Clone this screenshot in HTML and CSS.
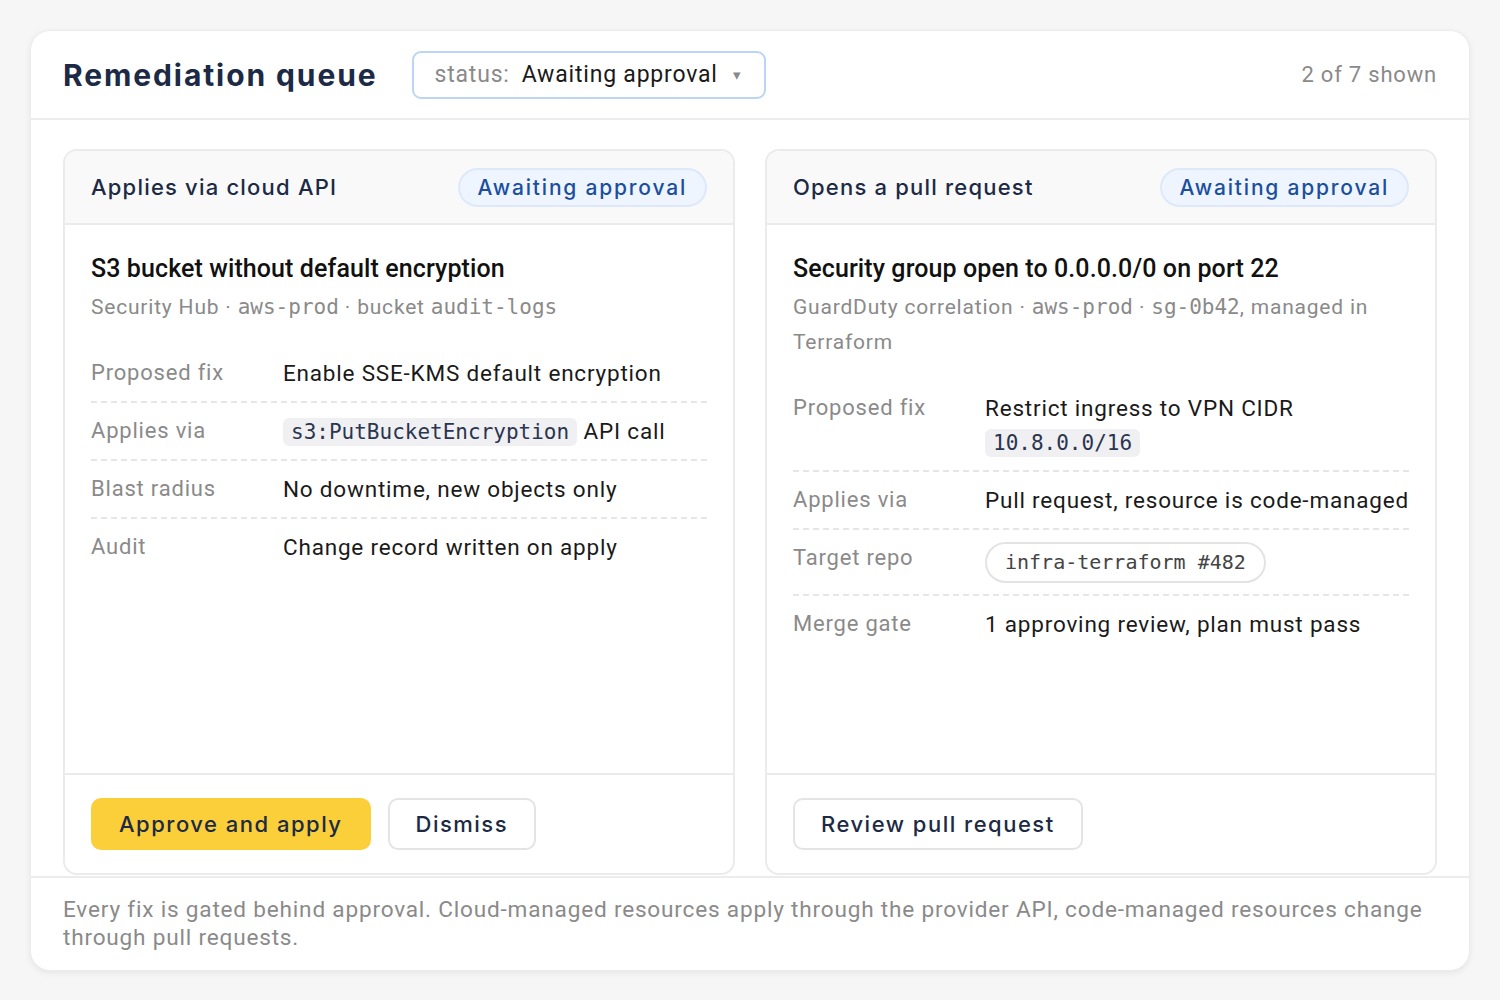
FILE: index.html
```html
<!DOCTYPE html>
<html lang="en">
<head>
  <meta charset="UTF-8">
  <meta name="viewport" content="width=device-width, initial-scale=1.0">
  <link rel="stylesheet" href="styles.css">
  <title>Remediation queue</title>
</head>
<body>
  <div class="queue">
    <div class="queue-head">
      <h1>Remediation queue</h1>
      <div class="status-filter">
        <span class="status-key">status:</span>
        <span class="status-value">Awaiting approval</span>
        <span class="caret">&#9662;</span>
      </div>
      <span class="queue-count">2 of 7 shown</span>
    </div>

    <div class="queue-body">
      <div class="card">
        <div class="card-head">
          <h2>Applies via cloud API</h2>
          <span class="badge">Awaiting approval</span>
        </div>
        <div class="card-main">
          <h3>S3 bucket without default encryption</h3>
          <p class="meta">Security Hub &middot; <span class="mono">aws-prod</span> &middot; bucket <span class="mono">audit-logs</span></p>
          <div class="facts">
            <div class="fact">
              <span class="fact-label">Proposed fix</span>
              <span class="fact-value">Enable SSE-KMS default encryption</span>
            </div>
            <div class="fact">
              <span class="fact-label">Applies via</span>
              <span class="fact-value"><code>s3:PutBucketEncryption</code> API call</span>
            </div>
            <div class="fact">
              <span class="fact-label">Blast radius</span>
              <span class="fact-value">No downtime, new objects only</span>
            </div>
            <div class="fact">
              <span class="fact-label">Audit</span>
              <span class="fact-value">Change record written on apply</span>
            </div>
          </div>
        </div>
        <div class="card-foot">
          <button class="btn btn-primary">Approve and apply</button>
          <button class="btn">Dismiss</button>
        </div>
      </div>

      <div class="card">
        <div class="card-head">
          <h2>Opens a pull request</h2>
          <span class="badge">Awaiting approval</span>
        </div>
        <div class="card-main">
          <h3>Security group open to 0.0.0.0/0 on port 22</h3>
          <p class="meta">GuardDuty correlation &middot; <span class="mono">aws-prod</span> &middot; <span class="mono">sg-0b42</span>, managed in Terraform</p>
          <div class="facts">
            <div class="fact">
              <span class="fact-label">Proposed fix</span>
              <span class="fact-value">Restrict ingress to VPN CIDR <code class="code-wrapped">10.8.0.0/16</code></span>
            </div>
            <div class="fact">
              <span class="fact-label">Applies via</span>
              <span class="fact-value">Pull request, resource is code-managed</span>
            </div>
            <div class="fact">
              <span class="fact-label">Target repo</span>
              <span class="fact-value"><span class="repo">infra-terraform #482</span></span>
            </div>
            <div class="fact">
              <span class="fact-label">Merge gate</span>
              <span class="fact-value">1 approving review, plan must pass</span>
            </div>
          </div>
        </div>
        <div class="card-foot">
          <button class="btn">Review pull request</button>
        </div>
      </div>
    </div>

    <p class="queue-note">Every fix is gated behind approval. Cloud-managed resources apply through the provider API, code-managed resources change through pull requests.</p>
  </div>
</body>
</html>
```

FILE: styles.css
```css
body {
  font-family: 'Roboto', 'Liberation Sans', sans-serif;
  letter-spacing: 0.05em;
  background: #f6f6f7;
  margin: 0;
  padding: 30px;
  color: #1a1a1a;
}

.queue {
  background-color: #ffffff;
  border: 1px solid #ececec;
  border-radius: 20px;
  box-shadow: 0 2px 6px rgba(0, 0, 0, 0.07);
  overflow: hidden;
}

.queue-head {
  display: flex;
  align-items: center;
  gap: 34px;
  height: 87px;
  padding: 0 32px;
  border-bottom: 2px solid #ececec;
}

.queue-head h1 {
  font-family: 'Inter', sans-serif;
  font-size: 30px;
  font-weight: 700;
  letter-spacing: 1.9px;
  color: #1c2a45;
  margin: 0;
}

.status-filter {
  display: flex;
  align-items: center;
  height: 44px;
  padding: 0 22px 0 21px;
  border: 2px solid #bcd5f6;
  border-radius: 9px;
  font-size: 23px;
}

.status-key {
  color: #8a8a8a;
  margin-right: 12px;
}

.status-value {
  color: #1a1a1a;
}

.caret {
  color: #8a8a8a;
  font-size: 15px;
  margin-left: 15px;
}

.queue-count {
  margin-left: auto;
  color: #8a8a8a;
  font-size: 22px;
}

.queue-body {
  display: grid;
  grid-template-columns: 1fr 1fr;
  gap: 30px;
  padding: 29px 32px 1px;
}

.card {
  display: flex;
  flex-direction: column;
  min-height: 722px;
  border: 2px solid #ebebeb;
  border-radius: 14px;
  overflow: hidden;
}

.card-head {
  display: flex;
  align-items: center;
  justify-content: space-between;
  height: 72px;
  padding: 0 26px;
  background: #f9f9fa;
  border-bottom: 2px solid #ebebeb;
}

.card-head h2 {
  font-family: 'Inter', sans-serif;
  font-size: 22px;
  font-weight: 500;
  letter-spacing: 1.2px;
  color: #1c2a45;
  margin: 0;
}

.badge {
  padding: 5px 18px;
  border: 2px solid #dde9fa;
  border-radius: 20px;
  background: #eef5fe;
  color: #1b4f9e;
  font-family: 'Inter', sans-serif;
  font-size: 21px;
  font-weight: 500;
  letter-spacing: 1.8px;
}

.card-main {
  flex: 1;
  padding: 28px 26px;
}

.card-main h3 {
  font-size: 25px;
  font-weight: 500;
  line-height: 32px;
  letter-spacing: 0.1px;
  color: #111;
  margin: 0;
}

.meta {
  margin: 5px 0 0;
  font-size: 21px;
  line-height: 35px;
  color: #8a8a8a;
}

.mono {
  font-family: 'DejaVu Sans Mono', monospace;
  font-size: 21px;
  letter-spacing: 0;
}

.facts {
  margin-top: 20px;
}

.fact {
  display: flex;
  padding: 13px 0;
  line-height: 30px;
  border-bottom: 2px dashed #e6e6e6;
  font-size: 22px;
}

.fact:last-child {
  border-bottom: none;
}

.fact-label {
  flex: 0 0 192px;
  color: #8a8a8a;
}

.fact-value {
  color: #1a1a1a;
  font-size: 22.5px;
}

.fact-value code {
  display: inline-block;
  padding: 0 8px;
  line-height: 28px;
  border-radius: 6px;
  background: #f0f0f2;
  color: #2a3550;
  font-family: 'DejaVu Sans Mono', monospace;
  font-size: 21px;
  letter-spacing: 0;
}

.fact-value .code-wrapped {
  margin-top: 6px;
}

.repo {
  display: inline-block;
  vertical-align: top;
  margin: -1px 0 -2px;
  padding: 4px 18px;
  line-height: 29px;
  border: 2px solid #e3e3e3;
  border-radius: 22px;
  color: #444;
  font-family: 'DejaVu Sans Mono', monospace;
  font-size: 20px;
  letter-spacing: 0;
}

.card-foot {
  display: flex;
  gap: 17px;
  padding: 23px 26px;
  border-top: 2px solid #ebebeb;
}

.btn {
  height: 52px;
  padding: 0 26px;
  background: #fff;
  border: 2px solid #e4e4e4;
  border-radius: 10px;
  color: #1c2a45;
  font-family: 'Inter', sans-serif;
  font-size: 22px;
  font-weight: 500;
  letter-spacing: 1.5px;
  cursor: pointer;
}

.btn-primary {
  background: #fbcf3a;
  border-color: #fbcf3a;
}

.queue-note {
  margin: 0;
  padding: 18px 32px 18px;
  border-top: 2px solid #ececec;
  color: #8a8a8a;
  font-size: 22.6px;
  line-height: 28px;
}
```
